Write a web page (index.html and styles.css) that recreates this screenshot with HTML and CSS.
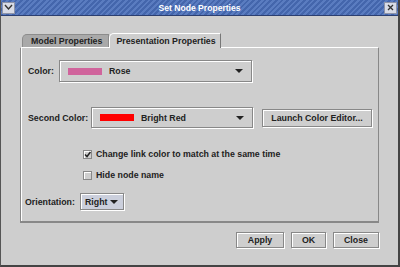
FILE: index.html
```html
<!DOCTYPE html>
<html lang="en">
<head>
    <meta charset="UTF-8">
    <title>Set Node Properties</title>
    <link rel="stylesheet" href="styles.css">
</head>
<body>
    <div class="window">
        <div class="titlebar">
            <span class="tb-btn">
                <svg width="9" height="7" viewBox="0 0 9 7"><path d="M1 1 L4.5 5 L8 1" fill="none" stroke="#333" stroke-width="1.4"/></svg>
            </span>
            <span class="title">Set Node Properties</span>
            <span class="tb-btn">
                <svg width="7" height="7" viewBox="0 0 7 7"><path d="M1 1 L6 6 M6 1 L1 6" stroke="#333" stroke-width="1.3"/></svg>
            </span>
        </div>
        <div class="content">
            <div class="tabs">
                <div class="tab">Model Properties</div>
                <div class="tab active">Presentation Properties</div>
            </div>
            <div class="panel">
                <div class="row row-color">
                    <label class="lbl-color">Color:</label>
                    <div class="combo combo-wide">
                        <span class="swatch rose"></span>
                        <span class="combo-text">Rose</span>
                        <span class="arrow"></span>
                    </div>
                </div>
                <div class="row row-second">
                    <label class="lbl-second">Second Color:</label>
                    <div class="combo combo-second">
                        <span class="swatch red"></span>
                        <span class="combo-text">Bright Red</span>
                        <span class="arrow"></span>
                    </div>
                    <button class="btn launch">Launch Color Editor...</button>
                </div>
                <div class="checks">
                    <div class="check-row"><span class="check checked">
                        <svg width="7" height="7" viewBox="0 0 7 7"><path d="M1 3.5 L3 5.5 L6.5 1" fill="none" stroke="#222" stroke-width="1.5"/></svg>
                    </span>Change link color to match at the same time</div>
                    <div class="check-row"><span class="check"></span>Hide node name</div>
                </div>
                <div class="row row-orient">
                    <label class="lbl-orient">Orientation:</label>
                    <div class="combo combo-small">
                        <span class="combo-text">Right</span>
                        <span class="arrow"></span>
                    </div>
                </div>
            </div>
            <div class="buttons">
                <button class="btn apply">Apply</button>
                <button class="btn ok">OK</button>
                <button class="btn close">Close</button>
            </div>
        </div>
    </div>
</body>
</html>
```
FILE: styles.css
```css
body {
    margin: 0;
    font-family: "Liberation Sans", Arial, sans-serif;
    font-size: 8.8px;
    font-weight: bold;
    color: #222;
    background: #cecece;
    white-space: nowrap;
}
.window {
    width: 400px;
    height: 267px;
    box-sizing: border-box;
    background: #cecece;
    border-left: 1px solid #555;
    border-right: 2px solid #444;
    border-bottom: 2px solid #444;
    display: flex;
    flex-direction: column;
}
.titlebar {
    height: 15px;
    flex-shrink: 0;
    display: flex;
    align-items: center;
    justify-content: space-between;
    padding: 0 1px;
    background: repeating-linear-gradient(135deg, #5a7cc0 0 2px, #4466ac 2px 4px);
    border-bottom: 1px solid #2c3f70;
}
.title {
    font-size: 8.6px;
    color: #fff;
}
.tb-btn {
    width: 13px;
    height: 12px;
    box-sizing: border-box;
    background: #d8dbe6;
    border: 1px solid #8d93a8;
    display: flex;
    align-items: center;
    justify-content: center;
}
.content {
    flex: 1;
    padding: 17px 19px 0 19px;
    display: flex;
    flex-direction: column;
}
.tabs {
    display: flex;
    align-items: flex-end;
    padding-left: 2px;
    height: 14px;
}
.tab {
    height: 12px;
    line-height: 12px;
    padding: 0 6px 0 8px;
    background: #a9a9a9;
    border: 1px solid #8c8c8c;
    border-bottom: none;
    border-radius: 5px 0 0 0;
}
.tab.active {
    height: 14px;
    line-height: 14px;
    background: #cecece;
    border-color: #fff #777 #cecece #fff;
    margin-bottom: -1px;
    padding: 0 4px 0 6px;
    position: relative;
}
.panel {
    height: 176px;
    box-sizing: border-box;
    border-top: 1px solid #fff;
    border-left: 1px solid #888;
    border-right: 1px solid #888;
    border-bottom: 2px solid #888;
    box-shadow: inset 1px 0 #fff;
    padding: 12px 0 0 7px;
}
.row {
    display: flex;
    align-items: center;
}
.lbl-color { width: 31px; }
.lbl-second { width: 63px; }
.lbl-orient { width: 55px; }
.combo {
    display: flex;
    align-items: center;
    flex-shrink: 0;
    box-sizing: border-box;
    border: 1px solid #888;
    box-shadow: inset 1px 1px #fff, 1px 1px #fff;
    padding: 0 8px;
}
.combo-wide {
    width: 193px;
    height: 22px;
}
.combo-second {
    width: 162px;
    height: 21px;
}
.combo-small {
    width: 44px;
    height: 17px;
    padding: 0 5px 0 4px;
    background: #cbcfdc;
}
.swatch {
    width: 34px;
    height: 7px;
    margin-right: 7px;
}
.rose { background: #d0649c; }
.red { background: #ff0000; }
.combo-text {
    flex: 1;
}
.arrow {
    width: 0;
    height: 0;
    border-left: 4px solid transparent;
    border-right: 4px solid transparent;
    border-top: 4px solid #222;
}
.row-second {
    margin-top: 25px;
}
.btn {
    font-family: inherit;
    font-weight: bold;
    font-size: 8.8px;
    color: #222;
    background: #cecece;
    border: 1px solid #888;
    box-shadow: inset 1px 1px #fff, 1px 1px #fff;
    padding: 0;
    height: 18px;
    flex-shrink: 0;
}
.launch {
    width: 110px;
    margin-left: 9px;
}
.checks {
    padding-left: 55px;
    margin-top: 20px;
}
.check-row {
    display: flex;
    align-items: center;
    height: 12px;
    margin-bottom: 9px;
}
.check {
    width: 9px;
    height: 9px;
    box-sizing: border-box;
    border: 1px solid #888;
    box-shadow: inset 1px 1px #fff;
    margin-right: 4px;
    display: flex;
    align-items: center;
    justify-content: center;
}
.row-orient {
    margin-top: 12px;
    margin-left: -3px;
}
.buttons {
    display: flex;
    justify-content: flex-end;
    gap: 7px;
    margin-top: 9px;
}
.apply { width: 48px; height: 16px; }
.ok { width: 35px; height: 16px; }
.close { width: 46px; height: 16px; }
```
